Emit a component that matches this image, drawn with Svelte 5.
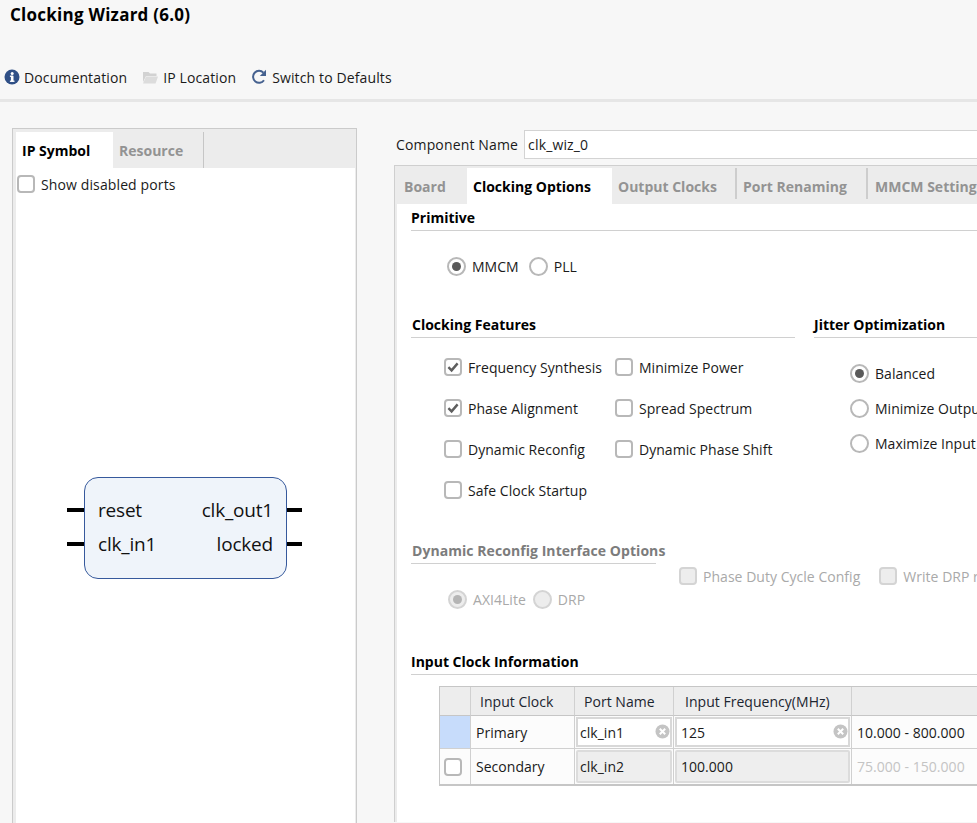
<script>
  const features = [
    { label: 'Frequency Synthesis', on: true },
    { label: 'Minimize Power', on: false },
    { label: 'Phase Alignment', on: true },
    { label: 'Spread Spectrum', on: false },
    { label: 'Dynamic Reconfig', on: false },
    { label: 'Dynamic Phase Shift', on: false },
    { label: 'Safe Clock Startup', on: false }
  ];
</script>

{#snippet check(on, cls = '')}
  <span class="check {cls}">
    {#if on}
      <svg width="14" height="14" viewBox="0 0 14 14"><path d="M2.4 7.2 5.6 10.4 11.6 3.4" fill="none" stroke="#5e5e5e" stroke-width="2.4"/></svg>
    {/if}
  </span>
{/snippet}

{#snippet radio(on, cls = '')}
  <span class="radio {cls}">{#if on}<span class="dot"></span>{/if}</span>
{/snippet}

{#snippet clear()}
  <svg class="clear" width="15" height="15" viewBox="0 0 15 15">
    <circle cx="7.5" cy="7.5" r="7" fill="#c4c4c4"/>
    <path d="M4.8 4.8 10.2 10.2M10.2 4.8 4.8 10.2" stroke="#fff" stroke-width="2"/>
  </svg>
{/snippet}

<div class="app">
  <header>
    <h1>Clocking Wizard (6.0)</h1>
    <nav>
      <span class="tool first">
        <svg width="16" height="16" viewBox="0 0 16 16">
          <circle cx="8" cy="8" r="7.5" fill="#2f4f86"/>
          <rect x="6.9" y="6.8" width="2.6" height="5.8" fill="#fff"/>
          <rect x="5.9" y="6.6" width="3" height="1.3" fill="#fff"/>
          <rect x="5.9" y="11.6" width="4.6" height="1.3" fill="#fff"/>
          <circle cx="8.2" cy="4.4" r="1.5" fill="#fff"/>
        </svg>
        Documentation
      </span>
      <span class="tool second">
        <svg width="15" height="13" viewBox="0 0 15 13">
          <path d="M0 1h5.5l1.5 1.6h6.5V5H3L0 11z" fill="#d2d2d2"/>
          <path d="M3 5.5h12L12.6 12.5H0z" fill="#dcdcdc"/>
        </svg>
        IP Location
      </span>
      <span class="tool third">
        <svg width="16" height="16" viewBox="0 0 16 16">
          <path d="M13 11.2A6 6 0 1 1 12.4 3.6" fill="none" stroke="#45618f" stroke-width="2"/>
          <path d="M15 0.8V7H8.8z" fill="#45618f"/>
        </svg>
        Switch to Defaults
      </span>
    </nav>
  </header>

  <main>
    <section class="left">
      <div class="tabs lefttabs">
        <span class="tab active sym">IP Symbol</span>
        <span class="tab res">Resource</span>
      </div>
      <div class="leftbody">
        <label class="show">{@render check(false)}<span>Show disabled ports</span></label>
        <div class="symbol">
          <div class="pins"><i></i><i></i></div>
          <div class="block">
            <div class="portrow"><span>reset</span><span>clk_out1</span></div>
            <div class="portrow"><span>clk_in1</span><span>locked</span></div>
          </div>
          <div class="pins outpins"><i></i><i></i></div>
        </div>
      </div>
    </section>

    <section class="right">
      <div class="compname">
        <span>Component Name</span>
        <div class="nameinput">clk_wiz_0</div>
      </div>
      <div class="tabframe">
        <div class="tabs righttabs">
          <span class="tab board">Board</span>
          <span class="tab active clocking">Clocking Options</span>
          <span class="tab output">Output Clocks</span>
          <span class="tab port">Port Renaming</span>
          <span class="tab mmcm">MMCM Settings</span>
        </div>
        <div class="page">
          <h2 class="primitive">Primitive</h2>
          <div class="primrow">
            <span class="opt">{@render radio(true)}MMCM</span>
            <span class="opt">{@render radio(false)}PLL</span>
          </div>

          <div class="twocol">
            <div class="features">
              <h2 class="nudge">Clocking Features</h2>
              <div class="featgrid">
                {#each features as f}
                  <span class="opt">{@render check(f.on)}{f.label}</span>
                {/each}
              </div>
            </div>
            <div class="jitter">
              <h2>Jitter Optimization</h2>
              <div class="jitlist">
                <span class="opt">{@render radio(true)}Balanced</span>
                <span class="opt">{@render radio(false)}Minimize Output Jitter</span>
                <span class="opt">{@render radio(false)}Maximize Input Jitter Filtering</span>
              </div>
            </div>
          </div>

          <div class="dyn">
            <div class="dynleft">
              <h2 class="muted nudge">Dynamic Reconfig Interface Options</h2>
              <div class="dynradios">
                <span class="opt off">{@render radio(true, 'dis')}AXI4Lite</span>
                <span class="opt off">{@render radio(false, 'dis')}DRP</span>
              </div>
            </div>
            <div class="dynchecks">
              <span class="opt off">{@render check(false, 'dis')}Phase Duty Cycle Config</span>
              <span class="opt off">{@render check(false, 'dis')}Write DRP registers</span>
            </div>
          </div>

          <h2 class="inputhead">Input Clock Information</h2>
          <div class="table">
            <div class="cell th"></div>
            <div class="cell th">Input Clock</div>
            <div class="cell th">Port Name</div>
            <div class="cell th">Input Frequency(MHz)</div>
            <div class="cell th"></div>

            <div class="cell sel"></div>
            <div class="cell td">Primary</div>
            <div class="cell edit"><div class="field">clk_in1{@render clear()}</div></div>
            <div class="cell edit"><div class="field freq">125{@render clear()}</div></div>
            <div class="cell td rng">10.000 - 800.000</div>

            <div class="cell td box">{@render check(false)}</div>
            <div class="cell td">Secondary</div>
            <div class="cell edit"><div class="field ro">clk_in2</div></div>
            <div class="cell edit"><div class="field ro freq">100.000</div></div>
            <div class="cell td rng dim">75.000 - 150.000</div>
          </div>
        </div>
      </div>
    </section>
  </main>
</div>

<style>
  :global(body) {
    margin: 0;
    background: #f7f7f7;
  }
  .app {
    width: 977px;
    height: 823px;
    overflow: hidden;
    background: #f7f7f7;
    color: #1a1a1a;
    font-family: "Open Sans", "Noto Sans", sans-serif;
    font-size: 14px;
    letter-spacing: 0.03px;
    white-space: nowrap;
  }
  header {
    height: 99px;
    border-bottom: 3px solid #e6e6e6;
  }
  h1 {
    margin: 0;
    padding: 4px 0 0 10px;
    height: 27px;
    box-sizing: content-box;
    font-size: 17px;
    line-height: 22px;
    font-weight: 700;
    color: #000;
    letter-spacing: 0.25px;
  }
  nav {
    display: flex;
    align-items: center;
    margin-top: 36px;
    height: 20px;
    letter-spacing: 0.12px;
  }
  .tool {
    display: flex;
    align-items: center;
    gap: 4px;
  }
  .tool.first { margin-left: 4px; }
  .tool.second { margin-left: 16px; gap: 5px; }
  .tool.third { margin-left: 15px; gap: 5px; }

  main {
    display: grid;
    grid-template-columns: 357px 1fr;
    padding-top: 26px;
    min-width: 0;
  }
  .left {
    margin-left: 12px;
    height: 695px;
    box-sizing: border-box;
    border: 1px solid #cbcbcb;
    border-bottom: 0;
    padding: 3px 1px 0 3px;
    background: #ececec;
    width: 345px;
  }
  .tabs {
    display: flex;
    height: 36px;
    background: #ececec;
    font-weight: 700;
    color: #939393;
    letter-spacing: 0;
  }
  .tab {
    display: flex;
    align-items: center;
    box-sizing: border-box;
    padding-left: 6px;
    border-right: 1px solid transparent;
  }
  .tab.active {
    background: #fff;
    color: #000;
  }
  .sym { width: 97px; }
  .res { width: 91px; border-right-color: #c6c6c6; }
  .leftbody {
    background: #fff;
    height: 660px;
    overflow: hidden;
  }
  .show {
    display: flex;
    align-items: center;
    gap: 6px;
    padding: 7px 0 0 1px;
    height: 25px;
    box-sizing: border-box;
    letter-spacing: 0.12px;
  }
  .symbol {
    display: flex;
    align-items: flex-start;
    margin: 284px 0 0 51px;
  }
  .block {
    flex: none;
    width: 203px;
    height: 102px;
    box-sizing: border-box;
    border: 1px solid #36599c;
    border-radius: 14px;
    background: #eff4fa;
    padding: 17px 13px 0 13px;
    font-size: 19px;
    letter-spacing: -0.2px;
    color: #111;
  }
  .portrow {
    display: flex;
    justify-content: space-between;
    height: 34px;
    line-height: 30px;
  }
  .pins {
    flex: none;
    width: 17px;
    padding-top: 31px;
  }
  .outpins { width: 15px; }
  .pins i {
    display: block;
    height: 4px;
    margin-bottom: 30px;
    background: #000;
  }

  .right {
    padding-left: 37px;
    min-width: 0;
  }
  .compname {
    display: flex;
    align-items: center;
    height: 31px;
    margin-left: 2px;
    padding-top: 2px;
    box-sizing: border-box;
    gap: 6px;
    letter-spacing: 0.15px;
  }
  .nameinput {
    flex: none;
    width: 600px;
    height: 29px;
    line-height: 27px;
    box-sizing: border-box;
    background: #fff;
    border: 1px solid #d3d3d3;
    padding-left: 3px;
  }
  .tabframe {
    margin-top: 6px;
    width: 640px;
    box-sizing: border-box;
    border: 1px solid #cfcfcf;
    border-bottom: 0;
    padding: 2px 0 0 2px;
    background: #ececec;
  }
  .righttabs { height: 36px; }
  .board { width: 70px; padding-left: 7px; border-right: 0; }
  .clocking { width: 145px; }
  .output, .port {
    height: 31px;
    padding-top: 5px;
    border-right: 2px solid #cdcdcd;
  }
  .output { width: 125px; }
  .port { width: 131px; }
  .mmcm { width: 160px; padding-left: 7px; }
  .page {
    background: #fff;
    height: 618px;
    padding: 0 0 0 14px;
  }
  h2 {
    margin: 0;
    font-size: 14px;
    line-height: 18px;
    font-weight: 700;
    color: #000;
    border-bottom: 1px solid #d0d0d0;
    height: 25px;
    box-sizing: border-box;
    padding-top: 3px;
    letter-spacing: 0;
  }
  h2.nudge { padding-left: 1px; }
  h2.primitive {
    padding-top: 5px;
    height: 27px;
    width: 640px;
  }
  .primrow {
    display: flex;
    gap: 10px;
    padding: 25px 0 0 36px;
    height: 82px;
    box-sizing: border-box;
  }
  .opt {
    display: inline-flex;
    align-items: center;
    gap: 6px;
    height: 20px;
  }
  .check {
    flex: none;
    width: 18px;
    height: 18px;
    box-sizing: border-box;
    border: 2px solid #b8b8b8;
    border-radius: 4px;
    background: #fff;
    display: flex;
    align-items: center;
    justify-content: center;
  }
  .check.dis {
    background: #ededed;
    border-color: #d4d4d4;
  }
  .radio {
    flex: none;
    width: 19px;
    height: 19px;
    box-sizing: border-box;
    border: 2px solid #b8b8b8;
    border-radius: 50%;
    background: #fff;
    display: flex;
    align-items: center;
    justify-content: center;
  }
  .radio.dis {
    background: #ededed;
    border-color: #d4d4d4;
  }
  .dot {
    width: 9px;
    height: 9px;
    border-radius: 50%;
    background: #5a5a5a;
  }
  .dis .dot { background: #b5b5b5; }

  .twocol {
    display: flex;
    gap: 19px;
  }
  .features { width: 384px; flex: none; }
  .jitter { flex: none; width: 300px; }
  .featgrid {
    display: grid;
    grid-template-columns: 171px auto;
    grid-auto-rows: 41px;
    padding: 19px 0 0 33px;
    height: 201px;
    box-sizing: border-box;
    justify-items: start;
  }
  .jitlist {
    display: flex;
    flex-direction: column;
    gap: 15px;
    padding: 25px 0 0 36px;
  }
  .off { color: #a9a9a9; }
  .dyn {
    display: flex;
    gap: 23px;
    height: 111px;
  }
  .dynleft { width: 245px; flex: none; }
  h2.muted { color: #7c7c7c; letter-spacing: 0.06px; }
  .dynradios {
    display: flex;
    gap: 7px;
    padding: 25px 0 0 37px;
  }
  .dynchecks {
    display: flex;
    gap: 19px;
    align-items: flex-start;
    padding-top: 27px;
  }
  .inputhead { width: 700px; }
  .table {
    margin: 11px 0 0 28px;
    display: grid;
    grid-template-columns: 31px 104px 99px 178px 300px;
    grid-template-rows: 29px 33px 35px;
    width: 712px;
    border: 1px solid #c6c6c6;
    border-right: 0;
    border-bottom-width: 2px;
  }
  .cell {
    box-sizing: border-box;
    border-right: 1px solid #d0d0d0;
    border-bottom: 1px solid #d0d0d0;
    background: #fcfcfc;
    display: flex;
    align-items: center;
    min-width: 0;
  }
  .cell:nth-child(n+11) { border-bottom: 0; }
  .th {
    background: #ededed;
    padding-left: 9px;
    border-bottom-color: #c6c6c6;
    color: #1c2530;
  }
  .th:nth-child(4) { padding-left: 11px; }
  .td { padding-left: 5px; }
  .sel { background: #c7dcfb; }
  .box { padding-left: 4px; }
  .rng { padding-left: 5px; }
  .dim { color: #c4c4c4; }
  .edit { padding: 1px; }
  .field {
    flex: 1;
    align-self: stretch;
    box-sizing: border-box;
    display: flex;
    align-items: center;
    justify-content: space-between;
    padding: 0 0 0 2px;
    border: 2px solid #d8d8d8;
    background: #fff;
    min-width: 0;
  }
  .field.freq { padding-left: 4px; }
  .field.ro {
    background: #eeeeee;
    border-color: #dcdcdc;
    border-radius: 2px;
  }
  .clear { flex: none; margin-top: -2px; }
</style>
